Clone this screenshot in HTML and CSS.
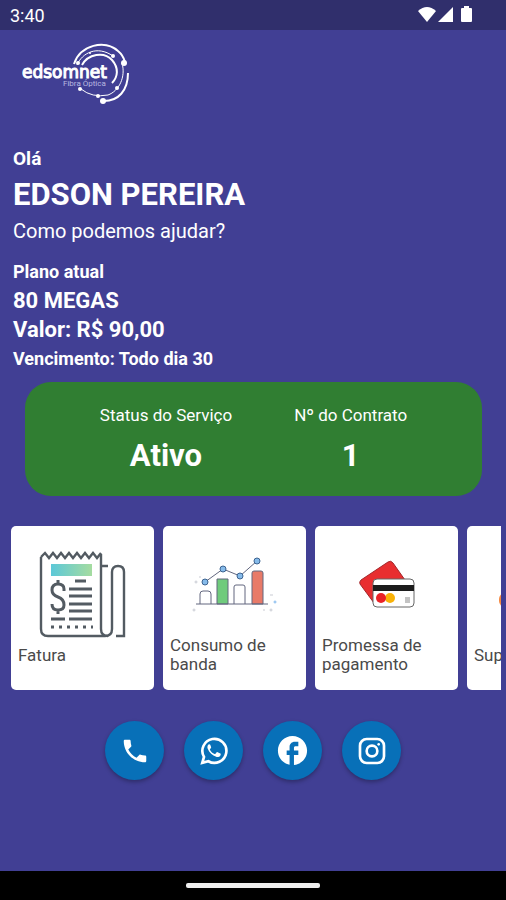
FILE: index.html
```html
<!DOCTYPE html>
<html lang="pt-BR">
<head>
    <meta charset="UTF-8">
    <meta name="viewport" content="width=device-width, initial-scale=1.0">
    <title>Edsomnet</title>
    <link rel="stylesheet" href="styles.css">
</head>
<body>
    <div class="status-bar">
        <span>3:40</span>
        <svg width="56" height="20" viewBox="0 0 56 20" fill="#fff" aria-hidden="true">
            <path d="M1 6 Q10 -2 19 6 L10 17 Z"/>
            <path d="M36 2 V17 H21 Z"/>
            <path d="M47 1 H52 V3 H54 Q55 3 55 4 V16 Q55 17 54 17 H45 Q44 17 44 16 V4 Q44 3 45 3 H47 Z"/>
        </svg>
    </div>

    <main>
        <svg class="logo" width="112" height="64" viewBox="0 0 112 64" role="img" aria-label="edsomnet Fibra Óptica">
            <g fill="none" stroke="#fff">
                <path stroke-width="2" d="M52 23 C58 4 83 -2 96 10 Q101 14 103 21"/>
                <path stroke-width="1" d="M55 24 C60 12 75 4 91 15"/>
                <path stroke-width="2" d="M60 24 C66 13 82 10 90 19 C97 27 96 36 90 42"/>
                <path stroke-width="1" d="M100 22 C104 36 97 50 86 54 Q70 57 59 48"/>
                <path stroke-width="2" d="M106 32 C106 50 96 60 82 60"/>
            </g>
            <g fill="#fff">
                <circle cx="102" cy="22" r="3"/>
                <circle cx="81" cy="60" r="3"/>
                <circle cx="91" cy="15" r="2"/>
                <circle cx="68" cy="12" r="1"/>
                <circle cx="58" cy="48" r="2"/>
                <circle cx="76" cy="55" r="2"/>
                <circle cx="95" cy="47" r="2"/>
                <circle cx="56" cy="22" r="2"/>
            </g>
            <text class="logo-name" x="0" y="37">edsomnet</text>
            <text class="logo-tag" x="41" y="45">Fibra Óptica</text>
        </svg>

        <section class="greeting">
            <p class="hello">Olá</p>
            <h1>EDSON PEREIRA</h1>
            <p class="question">Como podemos ajudar?</p>
        </section>

        <section class="plan">
            <p>Plano atual</p>
            <p class="plan-name">80 MEGAS</p>
            <p class="plan-value">Valor: R$ 90,00</p>
            <p>Vencimento: Todo dia 30</p>
        </section>

        <section class="service">
            <div class="service-item">
                <span>Status do Serviço</span>
                <strong>Ativo</strong>
            </div>
            <div class="service-item">
                <span>Nº do Contrato</span>
                <strong>1</strong>
            </div>
        </section>

        <nav class="cards">
            <a class="card" href="#fatura">
                <span class="card-icon">
                    <svg width="88" height="106" viewBox="0 -20 88 106" fill="none" stroke="#535b62" stroke-width="3">
                        <defs>
                            <linearGradient id="banner">
                                <stop offset="0" stop-color="#5cc8d8"/>
                                <stop offset="1" stop-color="#a5dca0"/>
                            </linearGradient>
                        </defs>
                        <g stroke-width="2.4">
                            <path d="M2 7 V79 Q2 86 9 86 H66 Q73 86 73 79 V22 Q73 16 79 16 Q85 16 85 22 V86 H77"/>
                            <path d="M2 7 L6 3 L10 8 L14 3 L18 8 L22 3 L26 8 L30 3 L34 8 L38 3 L42 8 L46 3 L50 8 L54 3 L58 8 L62 3"/>
                            <path d="M62 4 V79 Q62 86 69 86 M62 16 H69"/>
                        </g>
                        <path fill="url(#banner)" stroke="none" d="M12 14 H53 V26 H12 Z"/>
                        <path d="M36 31 H47 M30 39 H53 M30 46 H53 M30 54 H53 M30 61 H53 M30 69 H53 M12 69 H26"/>
                        <path d="M25 41 V39 Q25 34 19 34 Q13 34 13 40 Q13 45 19 47 Q25 49 25 55 Q25 60 19 60 Q13 60 13 54 M19 30 V34 M19 60 V64"/>
                        <path stroke-dasharray="3 5" d="M12 77 H54"/>
                    </svg>
                </span>
                <span class="card-label">Fatura</span>
            </a>
            <a class="card" href="#consumo">
                <span class="card-icon">
                    <svg width="86" height="60" viewBox="0 0 86 60" fill="none" stroke="#62677f">
                        <path stroke-width="1" d="M8 51 V41 Q8 38 11 38 H16 Q19 38 19 41 V51 M42 51 V34 Q42 32 44 32 H51 Q53 32 53 34 V51"/>
                        <path fill="#6fcb7c" d="M25 51 V26 H36 V51 Z"/>
                        <path fill="#e87a68" d="M60 51 V20 Q60 18 62 18 H69 Q71 18 71 20 V51 Z"/>
                        <path stroke-width="1" d="M4 51 H76"/>
                        <path stroke-width="1" d="M13 29 L31 16 L48 23 L65 8"/>
                        <g fill="#86bbea" stroke="#3d6390">
                            <circle cx="13" cy="29" r="3"/>
                            <circle cx="31" cy="16" r="3"/>
                            <circle cx="48" cy="23" r="3"/>
                            <circle cx="65" cy="8" r="3"/>
                        </g>
                        <g stroke="#c9cbd3">
                            <circle cx="4" cy="29" r="1"/>
                            <circle cx="2" cy="57" r="1"/>
                            <circle cx="79" cy="57" r="1"/>
                            <path d="M7 24 H9 M78 42 H81 M71 57 H73"/>
                        </g>
                        <circle cx="83" cy="49" r="1" stroke="#7fb8ee"/>
                    </svg>
                </span>
                <span class="card-label">Consumo de banda</span>
            </a>
            <a class="card" href="#promessa">
                <span class="card-icon">
                    <svg width="56" height="50" viewBox="0 -2 56 50">
                        <path fill="#e82e30" stroke="#a3272b" d="M2 20 L29 2 Q32 0 34 3 L46 20 L15 43 L1 24 Q0 22 2 20 Z"/>
                        <rect x="14" y="19" width="41" height="28" rx="4" fill="#fff" stroke="#666"/>
                        <path fill="#1c1c1c" d="M14 25 H55 V31 H14 Z"/>
                        <circle cx="31" cy="38" r="5" fill="#f9b208"/>
                        <circle cx="22" cy="38" r="5" fill="#ea2227"/>
                        <path stroke="#888" d="M46 38 H51 M46 40 H51 M46 42 H51"/>
                    </svg>
                </span>
                <span class="card-label">Promessa de pagamento</span>
            </a>
            <a class="card" href="#suporte">
                <span class="card-icon">
                    <svg width="80" height="70" viewBox="0 0 80 70" fill="none">
                        <path stroke="#f58a42" stroke-width="4" d="M8 48 V30 Q10 4 40 4 Q70 4 72 30 V48"/>
                        <rect x="0" y="45" width="14" height="14" rx="6" fill="#f58a42"/>
                        <rect x="66" y="45" width="14" height="14" rx="6" fill="#f58a42"/>
                    </svg>
                </span>
                <span class="card-label">Suporte</span>
            </a>
        </nav>

        <div class="contacts">
            <button type="button" aria-label="Telefone">
                <svg width="30" height="30" viewBox="0 0 24 24" fill="#fff">
                    <path d="M6.620 10.790c1.440 2.830 3.760 5.140 6.590 6.590l2.200-2.200c.27-.27.67-.36 1.020-.24 1.120.37 2.330.57 3.570.57.55 0 1 .45 1 1V20c0 .55-.45 1-1 1-9.390 0-17-7.610-17-17 0-.55.45-1 1-1h3.500c.55 0 1 .45 1 1 0 1.250.2 2.450.57 3.570.11.35.03.74-.25 1.020l-2.200 2.200z"/>
                </svg>
            </button>
            <button type="button" aria-label="WhatsApp">
                <svg width="32" height="32" viewBox="0 0 24 24" fill="none">
                    <path stroke="#fff" stroke-width="2" d="M3.200 20.900 L4.500 16.400 A9 9 0 1 1 7.800 19.700 Z"/>
                    <path fill="#fff" d="M9.200 7.300c-.3-.5-.9-.5-1.300-.1-.8.8-1.100 1.900-.6 3.200 1.100 2.900 3.600 5.200 6.300 6 1.300.4 2.600-.1 3.200-1.100.3-.6.4-1.200 0-1.400l-2.100-1c-.3-.2-.6-.1-.8.200l-.8 1c-.2.200-.4.200-.7.1-1.500-.6-2.600-1.600-3.400-3-.2-.3-.1-.5.100-.7l.6-.8c.2-.2.200-.4.100-.7z"/>
                </svg>
            </button>
            <button type="button" aria-label="Facebook">
                <svg width="35" height="35" viewBox="0 0 24 24" fill="#fff">
                    <path d="M22 12c0-5.520-4.480-10-10-10S2 6.480 2 12c0 4.840 3.440 8.870 8 9.800V15H8v-3h2V9.500C10 7.570 11.570 6 13.500 6H16v3h-2c-.55 0-1 .45-1 1v2h3v3h-3v6.950c5.050-.5 9-4.760 9-9.950z"/>
                </svg>
            </button>
            <button type="button" aria-label="Instagram">
                <svg width="32" height="32" viewBox="0 0 24 24" fill="none" stroke="#fff" stroke-width="2">
                    <rect x="3" y="3" width="18" height="18" rx="5"/>
                    <circle cx="12" cy="12" r="4"/>
                    <circle cx="17" cy="7" r="1" fill="#fff" stroke="none"/>
                </svg>
            </button>
        </div>
    </main>

    <div class="nav-bar"><span class="nav-handle"></span></div>
</body>
</html>
```
FILE: styles.css
```css
* {
    box-sizing: border-box;
}

body {
    margin: 0;
    min-height: 100vh;
    display: flex;
    flex-direction: column;
    background-color: #413f94;
    color: #fff;
    font-family: Roboto, sans-serif;
}

h1,
p {
    margin: 0;
}

.status-bar {
    display: flex;
    justify-content: space-between;
    align-items: center;
    height: 30px;
    padding: 0 33px 0 10px;
    background-color: #302f6c;
    font-size: 18px;
}

main {
    flex: 1;
    min-width: 0;
}

.logo {
    display: block;
    margin: 11px 0 0 22px;
}

.logo-name {
    fill: #fff;
    stroke: #fff;
    stroke-width: 1px;
    font-family: "DejaVu Sans", sans-serif;
    font-size: 17px;
}

.logo-tag {
    fill: #b9b8e0;
    font-size: 8px;
}

.greeting {
    margin-top: 38px;
    padding: 0 13px;
}

.hello {
    font-size: 19px;
    font-weight: 700;
    line-height: 32px;
}

h1 {
    font-size: 31px;
    font-weight: 700;
    line-height: 40px;
}

.question {
    font-size: 20px;
    line-height: 32px;
}

.plan {
    margin-top: 10px;
    padding: 0 13px;
    font-size: 18px;
    font-weight: 700;
    line-height: 29px;
}

.plan-name,
.plan-value {
    font-size: 22px;
}

.service {
    display: flex;
    justify-content: center;
    gap: 62px;
    margin: 9px 24px 0 25px;
    padding: 20px 0 16px;
    border-radius: 26px;
    background-color: #307e32;
}

.service-item {
    display: flex;
    flex-direction: column;
    align-items: center;
    gap: 4px;
    font-size: 17px;
    line-height: 26px;
}

.service-item strong {
    font-size: 31px;
    line-height: 48px;
}

.cards {
    display: flex;
    gap: 9px;
    margin: 30px 5px 0 11px;
    overflow-x: auto;
    scrollbar-width: none;
}

.card {
    flex: none;
    display: flex;
    flex-direction: column;
    width: 143px;
    height: 164px;
    padding: 4px 7px 16px;
    border-radius: 5px;
    background-color: #fff;
    color: #4a4a4a;
    font-size: 17px;
    line-height: 19px;
    text-decoration: none;
}

.card-icon {
    flex: 1;
    display: flex;
    justify-content: center;
    align-items: center;
}

.card-icon svg {
    overflow: visible;
}

.card-label {
    display: flex;
    align-items: center;
    height: 38px;
}

.contacts {
    display: flex;
    justify-content: center;
    gap: 20px;
    margin: 31px 0;
}

.contacts button {
    display: flex;
    justify-content: center;
    align-items: center;
    width: 59px;
    height: 59px;
    padding: 0;
    border: none;
    border-radius: 50%;
    background-color: #0870b8;
    box-shadow: 0 2px 4px rgba(0, 0, 0, 0.3);
    cursor: pointer;
}

.nav-bar {
    display: flex;
    justify-content: center;
    align-items: center;
    height: 29px;
    background-color: #000;
}

.nav-handle {
    width: 134px;
    height: 5px;
    border-radius: 2px;
    background-color: #eee;
}
```
